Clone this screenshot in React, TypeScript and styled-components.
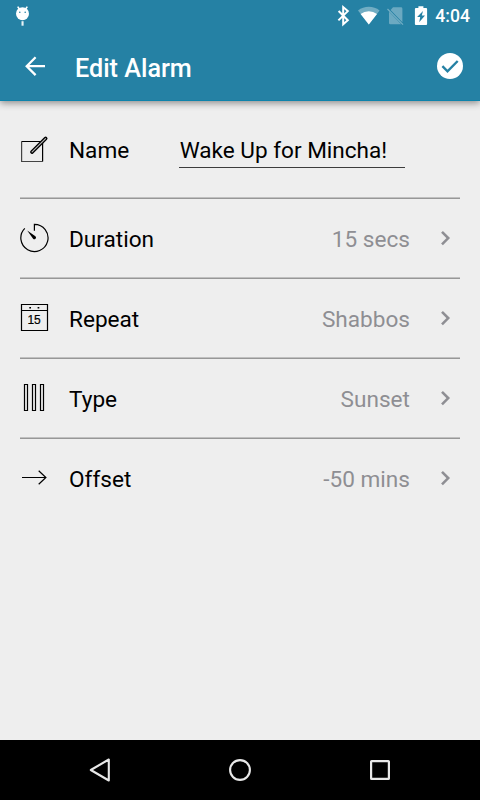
import React from "react";
import styled, { createGlobalStyle } from "styled-components";

const GlobalStyle = createGlobalStyle`
  body { margin: 0; background: #eeeeee; }
  * { box-sizing: border-box; }
`;

const Screen = styled.div`
  width: 480px;
  height: 800px;
  display: flex;
  flex-direction: column;
  overflow: hidden;
  background: #eeeeee;
  color: #000;
  font-family: Roboto, sans-serif;
  svg { display: block; flex: none; }
`;

const Header = styled.header`
  flex: none;
  height: 101px;
  background: #2581a4;
  border-bottom: 1px solid #0d83ab;
  color: #fff;
  box-shadow: 0 2px 7px rgba(0, 0, 0, 0.42);
`;

const StatusBar = styled.div`
  height: 32px;
  padding: 0 10px 0 14px;
  display: flex;
  align-items: center;
`;

const StatusIcons = styled.div`
  margin-left: auto;
  display: flex;
`;

const Clock = styled.span`
  width: 35px;
  text-align: right;
  font-size: 17.6px;
  line-height: 32px;
  font-weight: 500;
  white-space: nowrap;
`;

const Toolbar = styled.div`
  height: 68px;
  padding: 0 15px 0 20px;
  display: flex;
  align-items: center;
`;

const IconButton = styled.button`
  padding: 0;
  border: 0;
  background: none;
  color: inherit;
`;

const Title = styled.h1`
  flex: 1;
  margin: 6px 0 0 25px;
  font-size: 25.2px;
  line-height: 30px;
  font-weight: 500;
`;

const Form = styled.main`
  flex: 1;
  padding: 0 20px;
`;

const Row = styled.div<{ $tall?: boolean; $last?: boolean }>`
  height: ${(p) => (p.$tall ? 98 : 80)}px;
  display: flex;
  align-items: center;
  padding-bottom: 1px;
  border-bottom: 1px solid ${(p) => (p.$last ? "transparent" : "#979797")};
  box-shadow: ${(p) => (p.$last ? "none" : "inset 0 -1px #c0c0c0")};
`;

const Label = styled.span<{ $high?: boolean }>`
  width: 110px;
  padding: ${(p) => (p.$high ? 3 : 4)}px 0 0 19px;
  font-size: 22.6px;
  line-height: 28px;
`;

const Value = styled.span`
  flex: 1;
  padding-top: 4px;
  text-align: right;
  font-size: 22.6px;
  line-height: 28px;
  color: #8e8e93;
  margin-right: 20px;
`;

const NameField = styled.div`
  width: 226px;
  height: 33px;
  margin: 4px 0 0 19px;
  padding-left: 0.7px;
  border-bottom: 1px solid #3c3c3c;
  font-size: 22.55px;
  line-height: 32px;
  white-space: nowrap;
`;

const NavBar = styled.nav`
  flex: none;
  height: 60px;
  padding: 0 85px;
  display: flex;
  align-items: center;
  justify-content: space-between;
  background: #000;
  color: #e8e8e8;
`;

const Debug = () => (
  <svg width="18" height="32" viewBox="0 0 18 32" fill="#fff">
    <ellipse cx="8.5" cy="13.7" rx="6.5" ry="6.5" />
    <path d="M3.7 6.6 5.7 9.5M13.3 6.6 11.3 9.5" stroke="#fff" strokeWidth="1.6" />
    <rect x="7.5" y="21.2" width="2.1" height="4.5" opacity=".9" />
    <circle cx="5.8" cy="12.2" r=".8" fill="#2581a4" />
    <circle cx="11.2" cy="12.2" r=".8" fill="#2581a4" />
  </svg>
);

const StatusGlyphs = () => (
  <svg width="99" height="32" viewBox="336 0 99 32" fill="#fff">
    <path d="m338.6 11 9.2 9.2-4.6 4.1V7.1l4.6 4-9.4 9.3" fill="none" stroke="#fff" strokeWidth="2" />
    <path d="M358 10.6a17.5 17.5 0 0 1 21.6 0L368.8 24.6Z" opacity=".35" />
    <path d="M360.6 14a13.3 13.3 0 0 1 16.4 0L368.8 24.6Z" />
    <path d="M393 7.3h8a1.4 1.4 0 0 1 1.4 1.4v13.6L390.6 10ZM389 11.8 401.2 24.3H390.4a1.4 1.4 0 0 1-1.4-1.4Z" opacity=".32" />
    <path d="m387.5 9 15.5 15.6" stroke="#fff" strokeWidth="1.2" opacity=".36" fill="none" />
    <path d="M418.4 6.2h5v1.7h2.7a1 1 0 0 1 1 1v15.2a1 1 0 0 1-1 1h-10.2a1 1 0 0 1-1-1V8.9a1 1 0 0 1 1-1h2.5Z" />
    <path d="M423 11 417.1 17.1h3.1l-1 5.2 5.8-6.8h-3.2Z" fill="#2581a4" />
  </svg>
);

const BackArrow = () => (
  <svg width="30" height="30" viewBox="0 0 30 30" fill="none" stroke="#fff" strokeWidth="2.3">
    <path d="M25 15.2H7M15.6 6.2l-8.9 9 8.9 8.9" />
  </svg>
);

const Confirm = () => (
  <svg width="30" height="30" viewBox="0 0 30 30">
    <circle cx="15" cy="15" r="13" fill="#fff" />
    <path d="m7.4 15.2 5.1 5.1L22.7 10" fill="none" stroke="#2581a4" strokeWidth="2.4" />
  </svg>
);

const LineIcon = styled.svg.attrs({ width: 30, height: 30, viewBox: "0 0 30 30" })`
  fill: none;
  stroke: #000;
  stroke-width: 1.2;
`;

const Pencil = styled.path`
  stroke-width: 3.6;
  stroke-linecap: round;
`;

const PencilCore = styled.path`
  stroke: #b5b5b5;
  stroke-width: 1.2;
  stroke-linecap: round;
`;

const EditIcon = () => (
  <LineIcon>
    <path d="M1.6 7.5v20h21" stroke="#444" />
    <path d="M1.6 7.5h21v20" />
    <Pencil d="M11.9 18.1 25.7 4.4" />
    <PencilCore d="M12.1 17.9 25.5 4.6" />
  </LineIcon>
);

const TimerIcon = () => (
  <LineIcon>
    <path d="M14.4 7.8V1.3A13.6 13.6 0 1 1 4.8 5.3" />
    <path d="m7.2 7.6 8.2 5.6a1.7 1.7 0 0 1-2.3 2.6Z" fill="#000" stroke="none" />
  </LineIcon>
);

const CalendarDay = styled.text`
  font: 500 12px "Liberation Sans", sans-serif;
  fill: #000;
  stroke: #000;
  stroke-width: 0.2;
  text-anchor: middle;
`;

const CalendarIcon = () => (
  <LineIcon>
    <path d="M1.5 1.5h26v26h-26ZM1.5 7.5h26" />
    <path d="M9.3 4.7h1.7M17.6 4.7h1.7" strokeWidth="1.6" />
    <CalendarDay x="14.1" y="20.9">15</CalendarDay>
  </LineIcon>
);

const ColumnsIcon = () => (
  <LineIcon>
    <path d="M4.5 1.5h3v26h-3ZM12.5 1.5h3v26h-3ZM20.5 1.5h3v26h-3Z" />
  </LineIcon>
);

const ArrowIcon = () => (
  <LineIcon>
    <path d="M2 14.5h24M18.7 7.8l7.2 6.7-7.2 6.8" />
  </LineIcon>
);

const Chevron = () => (
  <svg width="30" height="30" viewBox="0 0 30 30" fill="none" stroke="#8e8e93" strokeWidth="2.6">
    <path d="m12 8.9 6.2 6.2-6.2 6.2" />
  </svg>
);

const settings = [
  { label: "Duration", value: "15 secs", Icon: TimerIcon },
  { label: "Repeat", value: "Shabbos", Icon: CalendarIcon },
  { label: "Type", value: "Sunset", Icon: ColumnsIcon },
  { label: "Offset", value: "-50 mins", Icon: ArrowIcon },
];

export default function App() {
  return (
    <Screen>
      <GlobalStyle />
      <Header>
        <StatusBar>
          <Debug />
          <StatusIcons><StatusGlyphs /></StatusIcons>
          <Clock>4:04</Clock>
        </StatusBar>
        <Toolbar>
          <IconButton aria-label="Back"><BackArrow /></IconButton>
          <Title>Edit Alarm</Title>
          <IconButton aria-label="Save"><Confirm /></IconButton>
        </Toolbar>
      </Header>
      <Form>
        <Row $tall>
          <EditIcon />
          <Label $high>Name</Label>
          <NameField>Wake Up for Mincha!</NameField>
        </Row>
        {settings.map(({ label, value, Icon }, i) => (
          <Row key={label} $last={i === settings.length - 1}>
            <Icon />
            <Label>{label}</Label>
            <Value>{value}</Value>
            <Chevron />
          </Row>
        ))}
      </Form>
      <NavBar>
        <svg width="30" height="30" viewBox="0 0 30 30" fill="none" stroke="currentColor" strokeWidth="2.1" strokeLinejoin="round">
          <path d="M5.8 15 23.8 4.5v21Z" />
        </svg>
        <svg width="30" height="30" viewBox="0 0 30 30" fill="none" stroke="currentColor" strokeWidth="2.1">
          <circle cx="15" cy="15" r="9.9" />
        </svg>
        <svg width="30" height="30" viewBox="0 0 30 30" fill="none" stroke="currentColor" strokeWidth="2.2">
          <rect x="6.1" y="6.1" width="17.8" height="17.8" rx=".5" />
        </svg>
      </NavBar>
    </Screen>
  );
}
